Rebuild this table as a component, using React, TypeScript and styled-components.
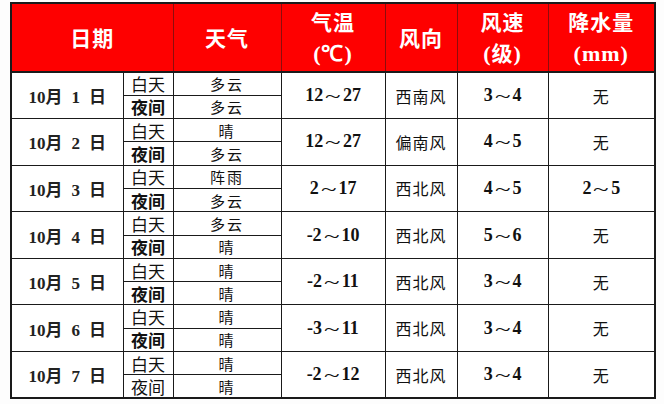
import React from 'react';
import styled, { createGlobalStyle } from 'styled-components';

type Day = {
  date: string;
  day: string;
  night: string;
  temp: [string, string];
  windDir: string;
  windSpeed: [string, string];
  rain: [string, string] | null;
  nightBold?: boolean;
};

const DAYS: Day[] = [
  { date: '1', day: '多云', night: '多云', temp: ['12', '27'], windDir: '西南风', windSpeed: ['3', '4'], rain: null, nightBold: true },
  { date: '2', day: '晴', night: '多云', temp: ['12', '27'], windDir: '偏南风', windSpeed: ['4', '5'], rain: null, nightBold: true },
  { date: '3', day: '阵雨', night: '多云', temp: ['2', '17'], windDir: '西北风', windSpeed: ['4', '5'], rain: ['2', '5'], nightBold: true },
  { date: '4', day: '多云', night: '晴', temp: ['-2', '10'], windDir: '西北风', windSpeed: ['5', '6'], rain: null, nightBold: true },
  { date: '5', day: '晴', night: '晴', temp: ['-2', '11'], windDir: '西北风', windSpeed: ['3', '4'], rain: null, nightBold: true },
  { date: '6', day: '晴', night: '晴', temp: ['-3', '11'], windDir: '西北风', windSpeed: ['3', '4'], rain: null, nightBold: true },
  { date: '7', day: '晴', night: '晴', temp: ['-2', '12'], windDir: '西北风', windSpeed: ['3', '4'], rain: null },
];

const COLS = [112, 50, 108, 104, 72, 91, 107];

const Range = ({ value }: { value: [string, string] }) => (
  <>
    {value[0]}
    <Tilde>~</Tilde>
    {value[1]}
  </>
);

export default function App() {
  return (
    <>
      <GlobalStyle />
      <Page>
        <Table>
          <colgroup>
            {COLS.map((w, i) => (
              <col key={i} style={{ width: w }} />
            ))}
          </colgroup>
          <thead>
            <HeadRow>
              <HeadCell colSpan={2}>日期</HeadCell>
              <HeadCell>天气</HeadCell>
              <HeadCell>
                气温
                <br />
                <Paren>(℃)</Paren>
              </HeadCell>
              <HeadCell>风向</HeadCell>
              <HeadCell>
                风速
                <br />
                <Paren>(</Paren>级<Paren>)</Paren>
              </HeadCell>
              <HeadCell $last>
                降水量
                <br />
                <Paren>(mm)</Paren>
              </HeadCell>
            </HeadRow>
          </thead>
          <tbody>
            {DAYS.map((d) => (
              <React.Fragment key={d.date}>
                <HalfRow>
                  <DateCell rowSpan={2}>
                    10月<Gap />{d.date}<Gap />日
                  </DateCell>
                  <PeriodCell>白天</PeriodCell>
                  <WeatherCell>{d.day}</WeatherCell>
                  <NumCell rowSpan={2}>
                    <Range value={d.temp} />
                  </NumCell>
                  <TextCell rowSpan={2}>{d.windDir}</TextCell>
                  <NumCell rowSpan={2}>
                    <Range value={d.windSpeed} />
                  </NumCell>
                  {d.rain ? (
                    <NumCell rowSpan={2}>
                      <Range value={d.rain} />
                    </NumCell>
                  ) : (
                    <TextCell rowSpan={2}>无</TextCell>
                  )}
                </HalfRow>
                <HalfRow>
                  <PeriodCell $bold={d.nightBold}>夜间</PeriodCell>
                  <WeatherCell>{d.night}</WeatherCell>
                </HalfRow>
              </React.Fragment>
            ))}
          </tbody>
        </Table>
      </Page>
    </>
  );
}

const GlobalStyle = createGlobalStyle`
  html, body {
    margin: 0;
    padding: 0;
    background: #fdfdfd;
  }
  body {
    font-family: "Liberation Serif", "Noto Sans CJK SC", serif;
  }
`;

const Page = styled.div`
  width: 664px;
  height: 404px;
  padding: 2px 0 0 10px;
  box-sizing: border-box;
`;

const Table = styled.table`
  width: 645px;
  table-layout: fixed;
  border-collapse: collapse;
  border: 2px solid #1a1a1a;
  background: #ffffff;
`;

const HeadRow = styled.tr`
  height: 69px;
  background: #fe0000;
`;

const HeadCell = styled.th<{ $last?: boolean }>`
  padding: 0;
  border-right: ${(p) => (p.$last ? '2px solid #1a1a1a' : '1px solid #8c0d0d')};
  border-bottom: 2px solid #1a1a1a;
  color: #ffffff;
  font-family: "Noto Sans CJK SC", sans-serif;
  font-size: 21px;
  font-weight: 700;
  line-height: 31px;
  letter-spacing: 1px;
  text-align: center;
  vertical-align: middle;
`;

const Paren = styled.span`
  font-family: "Liberation Serif", serif;
  font-size: 22px;
`;

const HalfRow = styled.tr`
  height: 23.3px;
`;

const BodyCell = styled.td`
  padding: 0;
  border: 1.5px solid #1a1a1a;
  color: #111111;
  text-align: center;
  vertical-align: middle;
  white-space: nowrap;
`;

const DateCell = styled(BodyCell)`
  font-family: "Liberation Serif", "Noto Sans CJK SC", serif;
  font-size: 17px;
  font-weight: 700;
  color: #222222;
`;

const Gap = styled.span`
  display: inline-block;
  width: 9px;
`;

const PeriodCell = styled(BodyCell)<{ $bold?: boolean }>`
  font-family: "Noto Sans CJK SC", sans-serif;
  font-size: 17px;
  font-weight: ${(p) => (p.$bold ? 700 : 400)};
  line-height: 21px;
`;

const WeatherCell = styled(BodyCell)`
  font-family: "Noto Sans CJK SC", sans-serif;
  font-size: 15px;
  line-height: 21px;
  letter-spacing: 2px;
`;

const NumCell = styled(BodyCell)`
  font-family: "Liberation Serif", serif;
  font-size: 18px;
  font-weight: 700;
`;

const Tilde = styled.span`
  display: inline-block;
  transform: scaleX(1.6) translateY(2px);
  margin: 0 5px;
  font-weight: 400;
`;

const TextCell = styled(BodyCell)`
  font-family: "Noto Sans CJK SC", sans-serif;
  font-size: 16px;
  letter-spacing: 1px;
`;
